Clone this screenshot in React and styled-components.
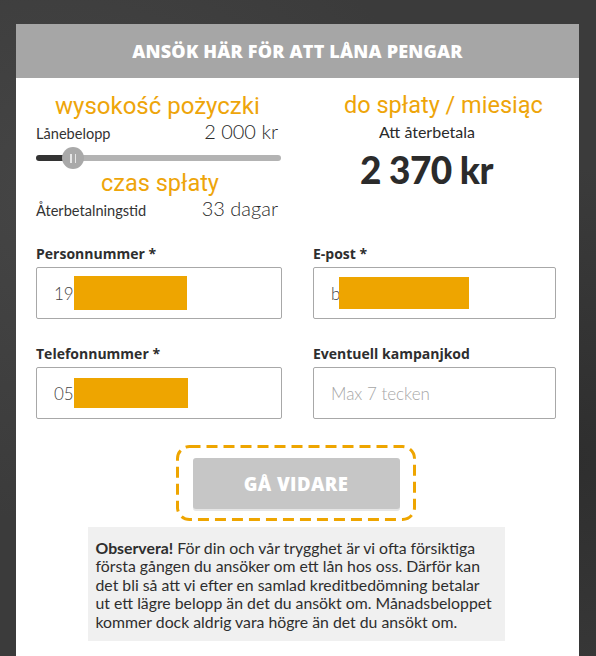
import React from 'react';
import styled, { createGlobalStyle } from 'styled-components';

const GlobalStyle = createGlobalStyle`
  html, body {
    margin: 0;
    padding: 0;
    background: #3a3a3a;
  }
  body {
    font-family: "Lato", "Open Sans", sans-serif;
  }
`;

const Page = styled.div`
  height: 656px;
  padding: 24px 16px 0 16px;
  box-sizing: border-box;
  overflow: hidden;
  background:
    radial-gradient(ellipse at 10% 30%, #454545 0%, transparent 50%),
    radial-gradient(ellipse at 95% 70%, #2e2e2e 0%, transparent 45%),
    #3b3b3b;
`;

const Card = styled.div`
  width: 563px;
  min-height: 640px;
  background: #fff;
`;

const Header = styled.div`
  height: 54px;
  background: #a6a6a6;
  display: flex;
  align-items: center;
  justify-content: center;
  color: #fff;
  font-family: "Open Sans", sans-serif;
  font-weight: 800;
  font-size: 18px;
  letter-spacing: 0.2px;
`;

const Body = styled.div`
  padding: 0 23px 0 20px;
`;

const Calc = styled.div`
  display: grid;
  grid-template-columns: 245px 1fr;
  column-gap: 32px;
`;

const Column = styled.div`
  display: flex;
  flex-direction: column;
`;

const OrangeTitle = styled.div`
  font-family: "Roboto", sans-serif;
  font-size: ${p => p.$size || 23.5}px;
  line-height: 26px;
  color: #eea50a;
  margin-top: ${p => p.$top || 0}px;
  padding-left: ${p => p.$indent || 0}px;
`;

const ValueRow = styled.div`
  display: flex;
  justify-content: space-between;
  align-items: baseline;
  color: #333;
  height: ${p => p.$h || 24}px;
  padding-right: 3px;
`;

const SmallLabel = styled.span`
  font-size: 14.6px;
`;

const Value = styled.span`
  font-size: 20px;
  font-weight: 300;
  color: #2a2a2a;
`;

const Slider = styled.div`
  position: relative;
  height: 24px;
  margin-top: 3px;
  display: flex;
  align-items: center;
`;

const Track = styled.div`
  width: 100%;
  height: 6px;
  border-radius: 3px;
  background: linear-gradient(to right, #333 0, #333 ${p => p.$fill}px, #b3b3b3 ${p => p.$fill}px);
`;

const Thumb = styled.div`
  position: absolute;
  left: ${p => p.$left}px;
  top: 1px;
  width: 22px;
  height: 22px;
  border-radius: 50%;
  background: #a9a9a9;
  display: flex;
  align-items: center;
  justify-content: center;
  gap: 3px;
  &::before, &::after {
    content: '';
    width: 1.5px;
    height: 9px;
    background: #e6e6e6;
  }
`;

const SubLabel = styled.div`
  font-size: 16px;
  color: #2a2a2a;
  margin-top: 4px;
  padding-left: ${p => p.$indent || 0}px;
`;

const BigAmount = styled.div`
  font-family: "Lato", sans-serif;
  font-weight: 900;
  font-size: 37px;
  color: #2b2b2b;
  margin-top: 6px;
  padding-left: ${p => p.$indent || 0}px;
  letter-spacing: -0.6px;
`;

const Form = styled.div`
  display: grid;
  grid-template-columns: 246px 243px;
  column-gap: 31px;
  row-gap: 26px;
  margin-top: 25px;
`;

const Field = styled.div`
  display: flex;
  flex-direction: column;
`;

const FieldLabel = styled.label`
  font-family: "Open Sans", sans-serif;
  font-weight: 700;
  font-size: 14px;
  color: #2e2e2e;
  height: 18px;
  line-height: 18px;
  margin-bottom: 4px;
`;

const Input = styled.div`
  height: 52px;
  box-sizing: border-box;
  border: 1px solid #a8a8a8;
  border-radius: 2px;
  display: flex;
  align-items: center;
  padding-left: 17px;
  font-size: 17px;
  font-weight: 300;
  color: ${p => (p.$placeholder ? '#a6a6a6' : '#444')};
`;

const Redact = styled.span`
  display: inline-block;
  width: ${p => p.$w}px;
  height: ${p => p.$h}px;
  background: #eea500;
  margin-left: ${p => p.$ml || 0}px;
`;

const Actions = styled.div`
  display: flex;
  flex-direction: column;
  align-items: center;
  margin-top: 26px;
`;

const ringSvg = encodeURIComponent(
  "<svg xmlns='http://www.w3.org/2000/svg' width='240' height='76'><rect x='1.5' y='1.5' width='237' height='73' rx='12' ry='12' fill='none' stroke='#eea500' stroke-width='3' stroke-dasharray='11 6'/></svg>"
);

const FocusRing = styled.div`
  width: 240px;
  height: 76px;
  background: url("data:image/svg+xml,${ringSvg}") no-repeat;
  display: flex;
  align-items: center;
  justify-content: center;
`;

const Button = styled.button`
  width: 207px;
  height: 51px;
  border: none;
  border-radius: 3px;
  background: #c6c6c6;
  color: #fff;
  font-family: "Open Sans", sans-serif;
  font-weight: 800;
  font-size: 18.5px;
  letter-spacing: 0.4px;
  box-shadow: 0 2px 0 #e6e6e6;
  margin-top: 1px;
  padding: 0;
`;

const Notice = styled.div`
  width: 417px;
  box-sizing: border-box;
  margin-top: 6px;
  background: #f0f0f0;
  padding: 12px 8px 10px 8px;
  font-size: 15.8px;
  line-height: 18.4px;
  color: #2e2e2e;
  white-space: nowrap;
  b {
    font-weight: 700;
  }
`;

export default function App() {
  return (
    <>
      <GlobalStyle />
      <Page>
        <Card>
          <Header>ANSÖK HÄR FÖR ATT LÅNA PENGAR</Header>
          <Body>
            <Calc>
              <Column>
                <OrangeTitle $top={15} $indent={19} $size={24}>wysokość pożyczki</OrangeTitle>
                <ValueRow $h={24}>
                  <SmallLabel>Lånebelopp</SmallLabel>
                  <Value>2 000 kr</Value>
                </ValueRow>
                <Slider>
                  <Track $fill={28} />
                  <Thumb $left={26} />
                </Slider>
                <OrangeTitle $indent={65}>czas spłaty</OrangeTitle>
                <ValueRow $h={24}>
                  <SmallLabel>Återbetalningstid</SmallLabel>
                  <Value>33 dagar</Value>
                </ValueRow>
              </Column>
              <Column>
                <OrangeTitle $top={14} $indent={31}>do spłaty / miesiąc</OrangeTitle>
                <SubLabel $indent={66}>Att återbetala</SubLabel>
                <BigAmount $indent={47}>2 370 kr</BigAmount>
              </Column>
            </Calc>

            <Form>
              <Field>
                <FieldLabel>Personnummer *</FieldLabel>
                <Input>
                  19<Redact $w={113} $h={34} />
                </Input>
              </Field>
              <Field>
                <FieldLabel>E-post *</FieldLabel>
                <Input>
                  b<Redact $w={130} $h={32} $ml={-1} />
                </Input>
              </Field>
              <Field>
                <FieldLabel>Telefonnummer *</FieldLabel>
                <Input>
                  05<Redact $w={114} $h={30} />
                </Input>
              </Field>
              <Field>
                <FieldLabel>Eventuell kampanjkod</FieldLabel>
                <Input $placeholder>Max 7 tecken</Input>
              </Field>
            </Form>

            <Actions>
              <FocusRing>
                <Button>GÅ VIDARE</Button>
              </FocusRing>
              <Notice>
                <b>Observera!</b> För din och vår trygghet är vi ofta försiktiga<br />
                första gången du ansöker om ett lån hos oss. Därför kan<br />
                det bli så att vi efter en samlad kreditbedömning betalar<br />
                ut ett lägre belopp än det du ansökt om. Månadsbeloppet<br />
                kommer dock aldrig vara högre än det du ansökt om.
              </Notice>
            </Actions>
          </Body>
        </Card>
      </Page>
    </>
  );
}
